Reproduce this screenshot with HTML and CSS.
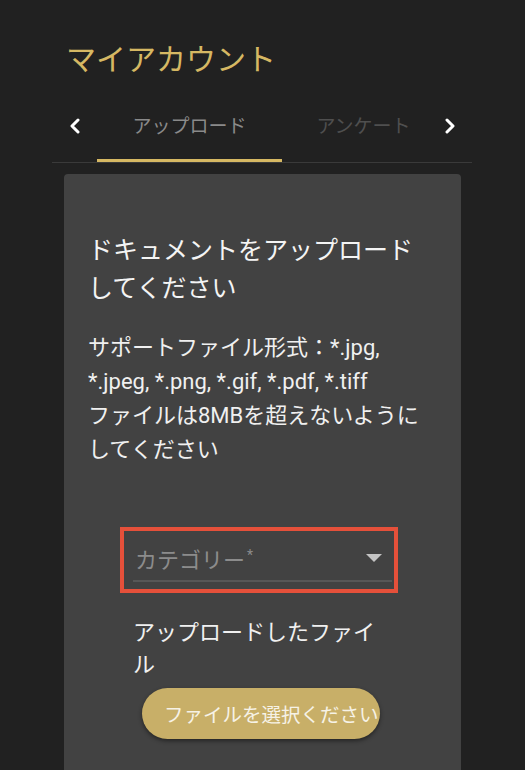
FILE: index.html
```html
<!DOCTYPE html>
<html lang="ja">
<head>
    <meta charset="UTF-8">
    <meta name="viewport" content="width=device-width, initial-scale=1.0">
    <title>マイアカウント</title>
    <link rel="stylesheet" href="styles.css">
</head>
<body>
    <div class="page">
        <h1 class="title">マイアカウント</h1>

        <div class="tabs">
            <button class="tab-arrow">
                <svg width="12" height="16" viewBox="0 0 12 16"><polyline points="9,2 3,8 9,14" fill="none" stroke="#fff" stroke-width="3" stroke-linecap="round" stroke-linejoin="round"/></svg>
            </button>
            <div class="tab-list">
                <div class="tab active">アップロード</div>
                <div class="tab">アンケート</div>
            </div>
            <button class="tab-arrow">
                <svg width="12" height="16" viewBox="0 0 12 16"><polyline points="3,2 9,8 3,14" fill="none" stroke="#fff" stroke-width="3" stroke-linecap="round" stroke-linejoin="round"/></svg>
            </button>
        </div>

        <div class="card">
            <h2 class="card-title">ドキュメントをアップロードしてください</h2>
            <p class="card-text">サポートファイル形式：*.jpg, *.jpeg, *.png, *.gif, *.pdf, *.tiff<br>ファイルは8MBを超えないようにしてください</p>

            <div class="form">
                <div class="field">
                    <div class="select">
                        <span class="placeholder">カテゴリー<sup>*</sup></span>
                        <span class="caret"></span>
                    </div>
                    <div class="highlight"></div>
                </div>
                <p class="form-label">アップロードしたファイル</p>
                <button class="file-btn">ファイルを選択ください</button>
            </div>
        </div>
    </div>
</body>
</html>
```

FILE: styles.css
```css
body {
    margin: 0;
    background: #212121;
    font-family: Roboto, "Noto Sans CJK JP", sans-serif;
    color: #f2f2f2;
}
.page {
    padding: 0 53px 0 52px;
    height: 770px;
    overflow: hidden;
}
.title {
    margin: 0;
    padding: 42px 0 0 14px;
    font-size: 30px;
    line-height: 36px;
    font-weight: 400;
    color: #d6b863;
}
.tabs {
    display: flex;
    margin-top: 22px;
    border-bottom: 1px solid #3a3a3a;
}
.tab-arrow {
    width: 45px;
    height: 62px;
    padding: 0 0 10px;
    border: none;
    background: none;
    display: flex;
    align-items: center;
    justify-content: center;
}
.tab-list {
    flex: 1;
    display: flex;
    overflow: hidden;
}
.tab {
    flex: none;
    width: 185px;
    height: 62px;
    box-sizing: border-box;
    padding-bottom: 10px;
    display: flex;
    align-items: center;
    justify-content: center;
    font-size: 19px;
    color: #4f4f4f;
    border-bottom: 3px solid transparent;
}
.tab + .tab {
    width: 163px;
}
.tab.active {
    color: #8a8a8a;
    border-bottom-color: #d6b863;
}
.card {
    margin: 11px 11px 0 12px;
    min-height: 640px;
    background: #424242;
    border-radius: 4px 4px 0 0;
    padding: 58px 24px 0;
}
.card-title {
    margin: 0;
    font-size: 25px;
    line-height: 37.5px;
    font-weight: 400;
    color: #f4f4f4;
}
.card-text {
    margin: 24px 0 0;
    font-size: 22px;
    line-height: 34px;
    color: #f0f0f0;
}
.form {
    margin: 65px 45px 0;
}
.field {
    position: relative;
}
.select {
    height: 50px;
    box-sizing: border-box;
    padding-top: 4px;
    display: flex;
    align-items: center;
    justify-content: space-between;
    border-bottom: 2px solid #575757;
}
.placeholder {
    font-size: 22px;
    color: #8c8c8c;
    padding-left: 2px;
}
.placeholder sup {
    font-size: 14px;
    margin-left: 2px;
}
.caret {
    margin-right: 10px;
    border-left: 8px solid transparent;
    border-right: 8px solid transparent;
    border-top: 8px solid #c4c4c4;
}
.highlight {
    position: absolute;
    left: -13px;
    right: -6px;
    top: -5px;
    bottom: -11px;
    border: 4px solid #e5503a;
}
.form-label {
    margin: 35px 0 0;
    font-size: 22px;
    line-height: 32px;
    color: #f0f0f0;
}
.file-btn {
    display: block;
    margin: 7px 0 0 9px;
    width: 238px;
    height: 51px;
    padding: 0 0 0 22px;
    border: none;
    border-radius: 25.5px;
    background: #c8af68;
    box-shadow: 0 2px 4px rgba(0, 0, 0, 0.45);
    color: #f6f2e6;
    font-family: Roboto, "Noto Sans CJK JP", sans-serif;
    font-size: 19.5px;
    text-align: left;
    white-space: nowrap;
    overflow: hidden;
}
```
